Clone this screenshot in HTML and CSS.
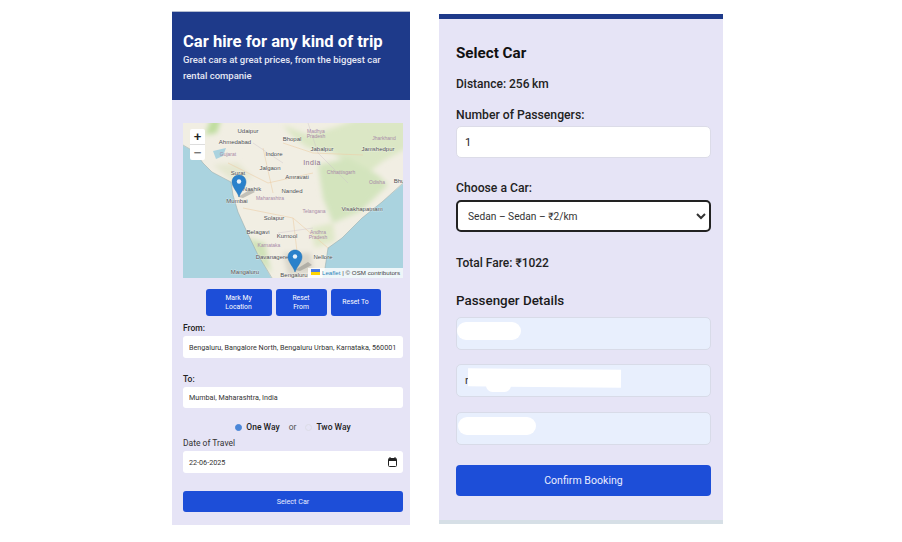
FILE: index.html
```html
<!DOCTYPE html>
<html lang="en">
<head>
    <meta charset="UTF-8">
    <title>Car hire</title>
    <link rel="stylesheet" href="styles.css">
</head>
<body>
<div class="page">
    <div class="panel-left">
        <div class="hero">
            <h1>Car hire for any kind of trip</h1>
            <p>Great cars at great prices, from the biggest car rental companie</p>
        </div>
        <div class="left-body">
            <div class="map">
                <svg class="map-svg" width="220" height="155" viewBox="0 0 220 155">
                    <defs>
                        <filter id="soft"><feGaussianBlur stdDeviation="2.5"/></filter>
                    </defs>
                    <rect width="220" height="155" fill="#f1eee3"/>
                    <g filter="url(#soft)">
                        <path d="M28 -4 L38 -4 L34 10 L22 12 Z" fill="#bfdd9f"/>
                        <path d="M100 2 L125 12 L150 5 L175 -4 L224 -4 L224 25 L200 38 L185 50 L170 45 L150 30 L125 25 L110 14 Z" fill="#dbe7c5"/>
                        <path d="M135 42 L165 35 L195 52 L205 62 L178 88 L150 100 L140 75 Z" fill="#d3e4bd"/>
                        <path d="M128 105 L150 100 L152 118 L132 125 Z" fill="#dfe8c8"/>
                        <path d="M64 115 L82 120 L88 150 L78 140 Z" fill="#cfe2b8"/>
                        <path d="M30 42 L55 40 L70 55 L50 58 Z" fill="#e5e7d0"/>
                        <path d="M100 130 L128 130 L130 150 L105 152 Z" fill="#d9d6ca"/>
                    </g>
                    <path d="M-1 22 L12 29 L20 40 L29 49 L40 55 L48 59 L50 72 L55 89 L64 109 L75 132 L89 156 L-1 156 Z" fill="#aad3df"/>
                    <path d="M221 60 L199 79 L179 95 L159 115 L145 125 L142 145 L139 156 L221 156 Z" fill="#aad3df"/>
                    <path d="M30 28 L43 25 L40 33 L33 36 Z" fill="#aad3df"/>
                    <path d="M0 22 L12 29 L20 40 L29 49 L48 59 L50 72 L55 89 L64 109 L75 132 L89 155 M220 60 L199 79 L179 95 L159 115 L145 125 L142 145" fill="none" stroke="#93a5a5" stroke-width=".5"/>
                    <path d="M45 40 L85 60 L130 50 M60 85 L110 95 L145 125 M110 95 L116 145 M80 25 L90 70 M100 20 L130 30 L180 32" fill="none" stroke="#eccfa8" stroke-width=".6"/>
                    <path d="M125 0 L135 30 L165 60 M95 110 L130 105 M70 20 L100 40" fill="none" stroke="#cdbfcb" stroke-width=".4"/>
                    <g class="city">
                        <text x="65" y="10">Udaipur</text>
                        <text x="52" y="21">Ahmedabad</text>
                        <text x="109" y="18">Bhopal</text>
                        <text x="139" y="28">Jabalpur</text>
                        <text x="195" y="28">Jamshedpur</text>
                        <text x="91" y="33">Indore</text>
                        <text x="87" y="47">Jalgaon</text>
                        <text x="114" y="56">Amravati</text>
                        <text x="55" y="52">Surat</text>
                        <text x="69" y="68">Nashik</text>
                        <text x="54" y="80">Mumbai</text>
                        <text x="109" y="70">Nanded</text>
                        <text x="91" y="97">Solapur</text>
                        <text x="75" y="111">Belagavi</text>
                        <text x="104" y="115">Kurnool</text>
                        <text x="89" y="136">Davanagere</text>
                        <text x="140" y="136">Nellore</text>
                        <text x="62" y="151">Mangaluru</text>
                        <text x="111" y="154">Bengaluru</text>
                        <text x="179" y="88">Visakhapatnam</text>
                        <text x="216" y="60">Bhu</text>
                    </g>
                    <g class="region">
                        <text x="133" y="10">Madhya</text>
                        <text x="133" y="15">Pradesh</text>
                        <text x="201" y="17">Jharkhand</text>
                        <text x="45" y="33">Gujarat</text>
                        <text x="158" y="51">Chhattisgarh</text>
                        <text x="194" y="61">Odisha</text>
                        <text x="87" y="77">Maharashtra</text>
                        <text x="131" y="90">Telangana</text>
                        <text x="135" y="111">Andhra</text>
                        <text x="135" y="116">Pradesh</text>
                        <text x="86" y="124">Karnataka</text>
                    </g>
                    <text x="129" y="42" class="country">India</text>
                    <path d="M55 74 L68 66 L72 69 L60 75 Z M112 147 L125 139 L129 142 L117 148 Z" fill="#555" opacity=".3"/>
                    <g transform="translate(49 52)">
                        <path d="M7 22 C5 16 0 12 0 7 C0 3 3 0 7 0 C11 0 14 3 14 7 C14 12 9 16 7 22 Z" fill="#2a81cb" stroke="#2071b0" stroke-width=".5"/>
                        <circle cx="7" cy="6.5" r="2.2" fill="#e8f2fa"/>
                    </g>
                    <g transform="translate(105 127)">
                        <path d="M7 22 C5 16 0 12 0 7 C0 3 3 0 7 0 C11 0 14 3 14 7 C14 12 9 16 7 22 Z" fill="#2a81cb" stroke="#2071b0" stroke-width=".5"/>
                        <circle cx="7" cy="6.5" r="2.2" fill="#e8f2fa"/>
                    </g>
                </svg>
                <div class="zoom-ctl">
                    <div class="zoom-btn">+</div>
                    <div class="zoom-btn">&minus;</div>
                </div>
                <div class="attrib">
                    <svg width="9" height="6" viewBox="0 0 9 6"><rect width="9" height="3" fill="#4c7be1"/><rect y="3" width="9" height="3" fill="#ffd500"/></svg>
                    <span class="attrib-link">Leaflet</span> | &copy; OSM contributors
                </div>
            </div>
            <div class="map-btns">
                <button class="btn-small btn-w1">Mark My Location</button>
                <button class="btn-small btn-w2">Reset From</button>
                <button class="btn-small btn-w3">Reset To</button>
            </div>
            <label class="lbl lbl-from">From:</label>
            <input class="field" type="text" value="Bengaluru, Bangalore North, Bengaluru Urban, Karnataka, 560001">
            <label class="lbl lbl-to">To:</label>
            <input class="field field-to" type="text" value="Mumbai, Maharashtra, India">
            <div class="trip-type">
                <span class="radio radio-on"></span><span class="way">One Way</span>
                <span class="or">or</span>
                <span class="radio"></span><span class="way">Two Way</span>
            </div>
            <label class="lbl lbl-date">Date of Travel</label>
            <div class="field date-field">
                <span>22-06-2025</span>
                <svg width="9" height="10" viewBox="0 0 9 10"><path d="M2 0v1.5M7 0v1.5" stroke="#222" stroke-width="1"/><rect x=".5" y="1.5" width="8" height="8" rx="1" fill="none" stroke="#222"/><rect x=".5" y="1.5" width="8" height="2.5" fill="#222"/></svg>
            </div>
            <button class="btn-select">Select Car</button>
        </div>
    </div>

    <div class="panel-right">
        <h2>Select Car</h2>
        <div class="info">Distance: 256&#8201;km</div>
        <label class="r-lbl r-lbl-pass">Number of Passengers:</label>
        <input class="r-field" type="text" value="1">
        <label class="r-lbl r-lbl-car">Choose a Car:</label>
        <select class="r-select">
            <option>Sedan – Sedan – ₹2/km</option>
        </select>
        <div class="info fare">Total Fare: ₹1022</div>
        <h3>Passenger Details</h3>
        <div class="p-field">
            <span class="blot blot-a"></span>
        </div>
        <div class="p-field">
            <span class="p-char">r</span>
            <span class="blot blot-b"></span>
            <span class="blot blot-c"></span>
        </div>
        <div class="p-field p-field-last">
            <span class="blot blot-d"></span>
        </div>
        <button class="btn-confirm">Confirm Booking</button>
    </div>
</div>
</body>
</html>
```

FILE: styles.css
```css
body{
    margin: 0;
    background-color: #fff;
    font-family: Roboto, "Noto Sans", sans-serif;
}
.page{
    display: flex;
    align-items: flex-start;
    gap: 29px;
    padding: 11px 0 0 172px;
}
.panel-left{
    width: 238px;
    height: 514px;
    background-color: #e6e4f6;
    border-top: 1px solid #b4bcd0;
    box-sizing: border-box;
}
.hero{
    height: 88px;
    box-sizing: border-box;
    padding: 20px 11px 0;
    background-color: #1e3a8a;
    color: #fff;
}
.hero h1{
    margin: 0;
    font-size: 16.6px;
    line-height: 20px;
    font-weight: 700;
}
.hero p{
    margin: 0;
    font-size: 9.5px;
    line-height: 16px;
    font-weight: 500;
    color: #e6e8f4;
}
.left-body{
    padding: 23px 7px 0 11px;
}
.map{
    position: relative;
    width: 220px;
    height: 155px;
    overflow: hidden;
}
.map-svg{
    display: block;
}
.city text{
    font-family: "Liberation Sans", sans-serif;
    font-size: 6px;
    fill: #4a4a4a;
    text-anchor: middle;
    stroke: #fff;
    stroke-width: .3px;
    paint-order: stroke;
}
.region text{
    font-family: "Liberation Sans", sans-serif;
    font-size: 5px;
    fill: #a98aa8;
    text-anchor: middle;
}
.country{
    font-family: "Liberation Sans", sans-serif;
    font-size: 7px;
    letter-spacing: .5px;
    fill: #8d6f8d;
    text-anchor: middle;
}
.zoom-ctl{
    position: absolute;
    top: 6px;
    left: 7px;
    width: 15px;
    background-color: #fff;
    border-radius: 2px;
}
.zoom-btn{
    height: 15px;
    font-family: "Liberation Sans", sans-serif;
    font-size: 13px;
    font-weight: 700;
    line-height: 15px;
    text-align: center;
    color: #222;
}
.zoom-btn + .zoom-btn{
    border-top: 1px solid #ddd;
    color: #777;
}
.attrib{
    position: absolute;
    right: 0;
    bottom: 0;
    padding: 0 3px;
    background-color: rgba(255,255,255,.8);
    font-family: "Liberation Sans", sans-serif;
    font-size: 6.2px;
    line-height: 10px;
    color: #444;
}
.attrib-link{
    color: #2c84b8;
}
.map-btns{
    display: flex;
    justify-content: center;
    gap: 4px;
    margin-top: 11px;
}
.btn-small{
    height: 27px;
    padding: 0 6px;
    border: none;
    border-radius: 3px;
    background-color: #1d4ed8;
    color: #fff;
    font-family: Roboto, sans-serif;
    font-size: 6.8px;
    font-weight: 400;
    line-height: 9px;
}
.btn-w1{ width: 66px; }
.btn-w2{ width: 51px; padding: 0 12px; }
.btn-w3{ width: 50px; }
.lbl{
    display: block;
    font-size: 8.5px;
    font-weight: 500;
    line-height: 11px;
    color: #222;
}
.lbl-from{ margin-top: 7px; }
.lbl-to{ margin-top: 16px; }
.lbl-date{ margin-top: 4px; color: #333; font-weight: 400; }
.field{
    display: block;
    width: 220px;
    height: 22px;
    margin-top: 2px;
    padding: 0 5px 0 6px;
    box-sizing: border-box;
    border: none;
    border-radius: 3px;
    background-color: #fff;
    color: #333;
    font-family: Roboto, sans-serif;
    font-size: 7.2px;
    outline: none;
}
.field-to{ height: 21px; }
.trip-type{
    display: flex;
    justify-content: center;
    align-items: center;
    margin-top: 12px;
    height: 14px;
    font-size: 8.5px;
    font-weight: 500;
    color: #222;
}
.radio{
    width: 7px;
    height: 7px;
    margin-right: 4px;
    border-radius: 50%;
    border: 1px solid #dcdce6;
    box-sizing: border-box;
}
.radio-on{
    background-color: #4a86d8;
    border-color: #4a86d8;
}
.or{
    margin: 0 9px;
    font-weight: 400;
    color: #555;
}
.date-field{
    display: flex;
    align-items: center;
    justify-content: space-between;
    height: 22px;
    padding-right: 6px;
}
.btn-select{
    display: block;
    width: 220px;
    height: 21px;
    margin-top: 18px;
    border: none;
    border-radius: 3px;
    background-color: #1d4ed8;
    color: #e8ecff;
    font-family: Roboto, sans-serif;
    font-size: 7.2px;
}
.panel-right{
    width: 284px;
    height: 510px;
    margin-top: 3px;
    padding: 0 12px 0 17px;
    box-sizing: border-box;
    background-color: #e6e4f6;
    border-top: 5px solid #1e3a8a;
    border-bottom: 4px solid #d6dfe6;
}
.panel-right h2{
    margin: 23px 0 0;
    font-size: 15.2px;
    line-height: 22px;
    font-weight: 700;
    color: #111;
}
.info{
    margin-top: 12px;
    font-size: 12px;
    line-height: 16px;
    font-weight: 500;
    color: #222;
}
.r-lbl{
    display: block;
    font-size: 12.2px;
    line-height: 16px;
    font-weight: 500;
    color: #222;
}
.r-lbl-pass{ margin-top: 15px; }
.r-lbl-car{ margin-top: 22px; }
.r-field{
    display: block;
    width: 255px;
    height: 32px;
    margin-top: 3px;
    padding: 0 8px;
    box-sizing: border-box;
    border: 1px solid #dcdce8;
    border-radius: 5px;
    background-color: #fff;
    font-family: Roboto, sans-serif;
    font-size: 11px;
    color: #222;
    outline: none;
}
.r-select{
    display: block;
    width: 255px;
    height: 32px;
    margin-top: 4px;
    padding: 0 6px;
    border: 2px solid #222;
    border-radius: 5px;
    background-color: #fff;
    font-family: Roboto, sans-serif;
    font-size: 10.2px;
    color: #333;
}
.fare{ margin-top: 23px; }
.panel-right h3{
    margin: 20px 0 0;
    font-size: 13.4px;
    line-height: 20px;
    font-weight: 500;
    color: #1a1a1a;
}
.p-field{
    position: relative;
    height: 33px;
    margin-top: 14px;
    box-sizing: border-box;
    border: 1px solid #d8dbe8;
    border-radius: 5px;
    background-color: #e8effd;
    font-size: 11px;
    line-height: 31px;
}
.panel-right h3 + .p-field{ margin-top: 6px; }
.p-field-last{ margin-top: 15px; }
.p-char{
    padding-left: 8px;
    color: #333;
}
/* white patches that hide the personal details */
.blot{
    position: absolute;
    background-color: #fff;
}
.blot-a{
    top: 4px;
    left: 0;
    width: 64px;
    height: 18px;
    border-radius: 9px;
}
.blot-b{
    top: 4px;
    left: 11px;
    width: 153px;
    height: 18px;
    transform: rotate(.5deg);
}
.blot-c{
    top: 14px;
    left: 29px;
    width: 25px;
    height: 13px;
    border-radius: 7px;
}
.blot-d{
    top: 4px;
    left: 1px;
    width: 78px;
    height: 18px;
    border-radius: 9px;
}
.btn-confirm{
    display: block;
    width: 255px;
    height: 31px;
    margin-top: 20px;
    border: none;
    border-radius: 4px;
    background-color: #1d4ed8;
    color: #e8ecff;
    font-family: Roboto, sans-serif;
    font-size: 10.6px;
}
```
